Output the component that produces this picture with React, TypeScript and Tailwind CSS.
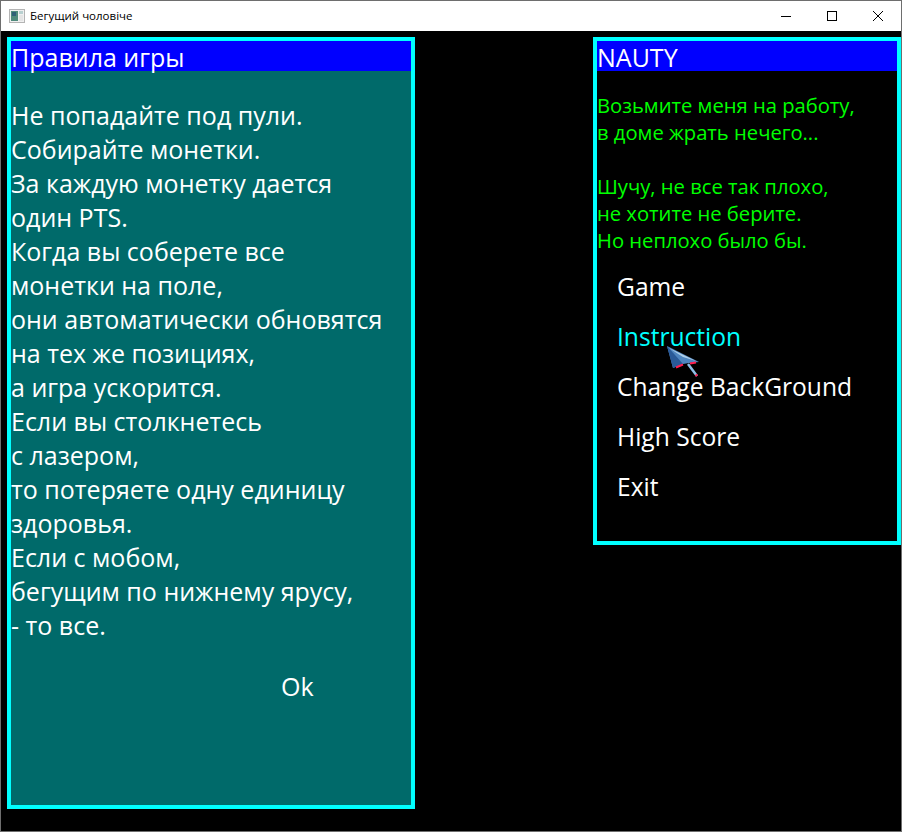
const rules = [
  'Не попадайте под пули.',
  'Собирайте монетки.',
  'За каждую монетку дается',
  'один PTS.',
  'Когда вы соберете все',
  'монетки на поле,',
  'они автоматически обновятся',
  'на тех же позициях,',
  'а игра ускорится.',
  'Если вы столкнетесь',
  'с лазером,',
  'то потеряете одну единицу',
  'здоровья.',
  'Если с мобом,',
  'бегущим по нижнему ярусу,',
  '- то все.',
];

const about = [
  'Возьмите меня на работу,',
  'в доме жрать нечего...',
  '',
  'Шучу, не все так плохо,',
  'не хотите не берите.',
  'Но неплохо было бы.',
];

const menu = ['Game', 'Instruction', 'Change BackGround', 'High Score', 'Exit'];

function AppIcon() {
  return (
    <svg width="16" height="14" viewBox="0 0 16 14" className="shrink-0">
      <rect x="0.5" y="0.5" width="15" height="13" fill="#f0f0f0" stroke="#b4b4b4" />
      <rect x="2" y="2" width="7" height="10" fill="#4f8a7c" />
      <rect x="3" y="3" width="4" height="4" fill="#2f5f78" />
      <rect x="10" y="2" width="4" height="3" fill="#b8d0d0" />
      <rect x="10" y="6" width="4" height="6" fill="#e4e4e4" />
    </svg>
  );
}

function TitleBar() {
  return (
    <div className="flex h-[30px] shrink-0 items-center bg-white">
      <div className="ml-[8px] mr-[5px]">
        <AppIcon />
      </div>
      <span className="text-[11.5px] text-black">Бегущий чоловіче</span>
      <div className="ml-auto flex">
        <div className="flex h-[30px] w-[46px] items-center justify-center">
          <svg width="10" height="10" viewBox="0 0 10 10">
            <path d="M0 5.5H10" stroke="#000" />
          </svg>
        </div>
        <div className="flex h-[30px] w-[46px] items-center justify-center">
          <svg width="10" height="10" viewBox="0 0 10 10">
            <rect x="0.5" y="0.5" width="9" height="9" fill="none" stroke="#000" />
          </svg>
        </div>
        <div className="flex h-[30px] w-[46px] items-center justify-center">
          <svg width="10" height="10" viewBox="0 0 10 10">
            <path d="M0 0L10 10M10 0L0 10" stroke="#000" />
          </svg>
        </div>
      </div>
    </div>
  );
}

function Cursor() {
  return (
    <svg width="34" height="34" viewBox="0 0 34 34" className="absolute left-[665px] top-[344px]">
      <path d="M22 19L31 31" stroke="#8fc0e8" strokeWidth="2.5" />
      <path d="M29.8 29.4L31 31" stroke="#ff2050" strokeWidth="2.5" />
      <path d="M1 1L33 17L23 18L17 19L7 23Z" fill="#4f86c0" />
      <path d="M1 1L17 19L7 23Z" fill="#2a5a98" />
      <path d="M3 3L30 16L17 12Z" fill="#b0cfe8" />
      <path d="M10 22.5L17 19.5M24 18.5L30 17.5" stroke="#ff2050" strokeWidth="2" />
    </svg>
  );
}

export default function App() {
  return (
    <div className="relative flex h-[832px] w-[902px] flex-col overflow-hidden border border-[#6e6e6e] bg-black font-['Open_Sans',sans-serif]">
      <TitleBar />
      <div className="flex flex-1 items-start justify-between pl-[6px] pt-[6px]">
        <div className="h-[772px] w-[408px] border-4 border-[#00ffff] bg-[#006a6a] text-white">
          <div className="h-[30px] bg-[#0000ff] text-[25px] leading-[32px]">Правила игры</div>
          <div className="pt-[27px] text-[25px] leading-[34px]">
            {rules.map((line) => (
              <div key={line} className="whitespace-nowrap">
                {line}
              </div>
            ))}
          </div>
          <div className="pl-[270px] pt-[27px] text-[25px] leading-[34px]">Ok</div>
        </div>
        <div className="h-[508px] w-[308px] border-4 border-[#00ffff] bg-black">
          <div className="h-[30px] bg-[#0000ff] text-[25px] leading-[32px] text-white">NAUTY</div>
          <div className="pt-[21px] text-[20.2px] leading-[27px] text-[#00ff00]">
            {about.map((line, i) => (
              <div key={i} className="h-[27px] whitespace-nowrap">
                {line}
              </div>
            ))}
          </div>
          <div className="pl-[20px] pt-[8px] text-[24.6px] leading-[50px] text-white">
            {menu.map((item) => (
              <div key={item} className={item === 'Instruction' ? 'text-[#00ffff]' : ''}>
                {item}
              </div>
            ))}
          </div>
        </div>
      </div>
      <Cursor />
    </div>
  );
}
